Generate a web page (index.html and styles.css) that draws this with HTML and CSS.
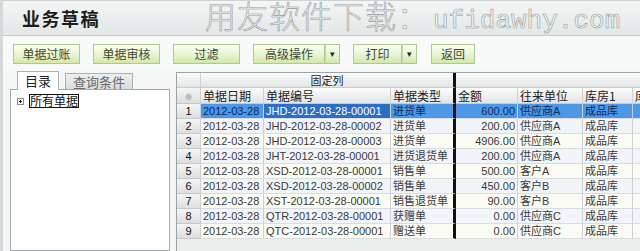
FILE: index.html
```html
<!DOCTYPE html>
<html lang="zh-CN">
<head>
    <meta charset="UTF-8">
    <meta name="viewport" content="width=device-width, initial-scale=1.0">
    <title>业务草稿</title>
    <link rel="stylesheet" href="styles.css">
</head>
<body>
    <div class="window">
        <header class="header">
            <h1 class="title">业务草稿</h1>
            <div class="watermark">用友软件下载：<span class="wm-url">ufidawhy.com</span></div>
        </header>

        <div class="toolbar">
            <button class="btn">单据过账</button>
            <button class="btn">单据审核</button>
            <button class="btn">过滤</button>
            <div class="split">
                <button class="btn btn-main wide">高级操作</button>
                <button class="btn btn-drop">&#9662;</button>
            </div>
            <div class="split">
                <button class="btn btn-main narrow">打印</button>
                <button class="btn btn-drop">&#9662;</button>
            </div>
            <button class="btn back">返回</button>
        </div>

        <div class="main">
            <div class="side">
                <div class="tabs">
                    <span class="tab active">目录</span>
                    <span class="tab">查询条件</span>
                </div>
                <div class="tree">
                    <div class="node">
                        <svg class="expander" width="7" height="7" viewBox="0 0 7 7">
                            <rect x="0.5" y="0.5" width="6" height="6" fill="#fff" stroke="#8c8c8c"/>
                            <path d="M2 3.5h3M3.5 2v3" stroke="#222"/>
                        </svg>
                        <span class="node-label">所有单据</span>
                    </div>
                </div>
            </div>

            <div class="grid">
                <table>
                    <colgroup>
                        <col style="width: 24px">
                        <col style="width: 63px">
                        <col style="width: 127px">
                        <col style="width: 65px">
                        <col style="width: 62px">
                        <col style="width: 65px">
                        <col style="width: 50px">
                        <col style="width: 70px">
                    </colgroup>
                    <thead>
                        <tr class="band">
                            <th></th>
                            <th colspan="3" class="fix-end center">固定列</th>
                            <th colspan="4"></th>
                        </tr>
                        <tr class="heads">
                            <th class="rn dot">&#9679;</th>
                            <th>单据日期</th>
                            <th>单据编号</th>
                            <th class="fix-end">单据类型</th>
                            <th>金额</th>
                            <th>往来单位</th>
                            <th>库房1</th>
                            <th>库房2</th>
                        </tr>
                    </thead>
                    <tbody>
                        <tr class="sel">
                            <td class="rn">1</td><td>2012-03-28</td><td class="focus">JHD-2012-03-28-00001</td><td class="fix-end">进货单</td>
                            <td class="num">600.00</td><td>供应商A</td><td>成品库</td><td></td>
                        </tr>
                        <tr>
                            <td class="rn">2</td><td>2012-03-28</td><td>JHD-2012-03-28-00002</td><td class="fix-end">进货单</td>
                            <td class="num">200.00</td><td>供应商A</td><td>成品库</td><td></td>
                        </tr>
                        <tr>
                            <td class="rn">3</td><td>2012-03-28</td><td>JHD-2012-03-28-00003</td><td class="fix-end">进货单</td>
                            <td class="num">4906.00</td><td>供应商A</td><td>成品库</td><td></td>
                        </tr>
                        <tr>
                            <td class="rn">4</td><td>2012-03-28</td><td>JHT-2012-03-28-00001</td><td class="fix-end">进货退货单</td>
                            <td class="num">200.00</td><td>供应商A</td><td>成品库</td><td></td>
                        </tr>
                        <tr>
                            <td class="rn">5</td><td>2012-03-28</td><td>XSD-2012-03-28-00001</td><td class="fix-end">销售单</td>
                            <td class="num">500.00</td><td>客户A</td><td>成品库</td><td></td>
                        </tr>
                        <tr>
                            <td class="rn">6</td><td>2012-03-28</td><td>XSD-2012-03-28-00002</td><td class="fix-end">销售单</td>
                            <td class="num">450.00</td><td>客户B</td><td>成品库</td><td></td>
                        </tr>
                        <tr>
                            <td class="rn">7</td><td>2012-03-28</td><td>XST-2012-03-28-00001</td><td class="fix-end">销售退货单</td>
                            <td class="num">90.00</td><td>客户B</td><td>成品库</td><td></td>
                        </tr>
                        <tr>
                            <td class="rn">8</td><td>2012-03-28</td><td>QTR-2012-03-28-00001</td><td class="fix-end">获赠单</td>
                            <td class="num">0.00</td><td>供应商C</td><td>成品库</td><td></td>
                        </tr>
                        <tr>
                            <td class="rn">9</td><td>2012-03-28</td><td>QTC-2012-03-28-00001</td><td class="fix-end">赠送单</td>
                            <td class="num">0.00</td><td>供应商C</td><td>成品库</td><td></td>
                        </tr>
                    </tbody>
                </table>
            </div>
        </div>
    </div>
</body>
</html>
```

FILE: styles.css
```css
body {
    margin: 0;
    width: 640px;
    height: 251px;
    overflow: hidden;
    background-color: #f4f5f5;
    font-family: "Liberation Sans", "Noto Sans CJK SC", sans-serif;
}

.window {
    height: 251px;
    border-left: 3px solid #d3d8d8;
}

/* title bar */
.header {
    box-sizing: border-box;
    height: 36px;
    display: flex;
    align-items: center;
    padding-left: 19px;
    border-top: 1px solid #cdd2d2;
    border-bottom: 1px solid #c6cccc;
    background: linear-gradient(#f4f6f6, #e2e6e6);
    white-space: nowrap;
}

.title {
    flex-shrink: 0;
    margin: 0;
    width: 78px;
    font-family: "Noto Sans CJK SC", sans-serif;
    font-size: 18px;
    font-weight: bold;
    letter-spacing: 1.5px;
    color: #1b1b1b;
}

.watermark {
    flex-shrink: 0;
    margin-left: 105px;
    font-family: "Noto Sans CJK SC", sans-serif;
    font-size: 31px;
    font-weight: 300;
    line-height: 34px;
    letter-spacing: 1px;
    color: #f1f2f2;
    -webkit-text-stroke: 0.6px #959b9b;
}

.wm-url {
    margin-left: 4px;
    font-family: "Liberation Mono", monospace;
    font-size: 26px;
    letter-spacing: 0;
}

/* toolbar */
.toolbar {
    box-sizing: border-box;
    height: 35px;
    display: flex;
    gap: 13px;
    padding: 8px 0 0 10px;
    background-color: #f8f9f9;
}

.btn {
    box-sizing: border-box;
    width: 67px;
    height: 20px;
    padding: 0;
    border: 1px solid #abca8b;
    background: linear-gradient(#fbfdf5, #e9f5d6 50%, #d1e9a8);
    color: #3f4a33;
    font-family: "Noto Sans CJK SC", sans-serif;
    font-size: 12px;
    line-height: 18px;
    cursor: pointer;
}

.split {
    display: flex;
}

.btn-main.wide {
    width: 72px;
}

.btn-main.narrow {
    width: 49px;
}

.btn-drop {
    width: 15px;
    border-left: 1px solid #c5d8b0;
    font-size: 9px;
    color: #222;
}

.back {
    width: 44px;
    margin-left: 1px;
}

/* left side panel */
.main {
    display: flex;
    height: 180px;
}

.side {
    display: flex;
    flex-direction: column;
    width: 160px;
    margin-left: 7px;
}

.tabs {
    display: flex;
    align-items: flex-end;
    gap: 6px;
    height: 18px;
    padding-left: 7px;
}

.tab {
    box-sizing: border-box;
    height: 16px;
    padding: 0 7px;
    border: 1px solid #a9afb4;
    border-bottom: none;
    background: linear-gradient(#eef0f0, #d8dcdc);
    color: #6b6b6b;
    font-family: "Noto Sans CJK SC", sans-serif;
    font-size: 13px;
    line-height: 15px;
}

.tab.active {
    position: relative;
    z-index: 1;
    height: 19px;
    margin-bottom: -1px;
    background: #fff;
    color: #222;
    line-height: 17px;
}

.tree {
    box-sizing: border-box;
    flex: 1;
    background: #fff;
    border: 1px solid #a4aaae;
}

.node {
    display: flex;
    align-items: center;
    padding: 4px 0 0 6px;
}

.node-label {
    margin-left: 5px;
    border: 1px solid #111;
    font-family: "Noto Sans CJK SC", sans-serif;
    font-size: 12px;
    line-height: 12px;
    color: #111;
}

/* data grid */
.grid {
    flex: 1;
    margin: 1px 0 0 6px;
    overflow: hidden;
    border-top: 1px solid #9aa3a8;
    border-left: 1px solid #9aa3a8;
    background-color: #eceeee;
}

table {
    table-layout: fixed;
    width: 526px;
    border-collapse: separate;
    border-spacing: 0;
}

th, td {
    box-sizing: border-box;
    height: 15px;
    padding: 0 2px;
    border-right: 1px solid #cdd1d4;
    border-bottom: 1px solid #dadde0;
    overflow: hidden;
    white-space: nowrap;
    font-size: 11px;
    line-height: 14px;
    color: #3a3a3a;
}

th {
    background: linear-gradient(#fcfcfc, #e2e4e5);
    font-family: "Noto Sans CJK SC", sans-serif;
    font-weight: normal;
    font-size: 12px;
    text-align: left;
    color: #222;
    border-bottom-color: #c9cdd0;
}

.band th {
    font-size: 11px;
    line-height: 13px;
}

.heads th {
    height: 16px;
}

.center {
    text-align: center;
}

.rn {
    text-align: center;
    background: linear-gradient(#f5f5f5, #dcdedf);
    color: #111;
    border-bottom-color: #c4c8cb;
}

.dot {
    font-size: 7px;
    color: #b9bdc0;
}

.num {
    text-align: right;
}

.fix-end {
    border-right: 3px solid #111;
}

tbody tr:nth-child(odd) td {
    background-color: #fafbf2;
}

tbody tr:nth-child(even) td {
    background-color: #f1f5fa;
}

tbody tr td.rn {
    background: linear-gradient(#f5f5f5, #dcdedf);
}

tbody tr.sel td {
    background-color: #4c97e6;
    color: #0e2a5e;
}

tbody tr.sel td.focus {
    background-color: #2d6ec6;
    color: #fff;
}

tbody tr.sel td.rn {
    background: linear-gradient(#f5f5f5, #dcdedf);
    color: #111;
}
```
